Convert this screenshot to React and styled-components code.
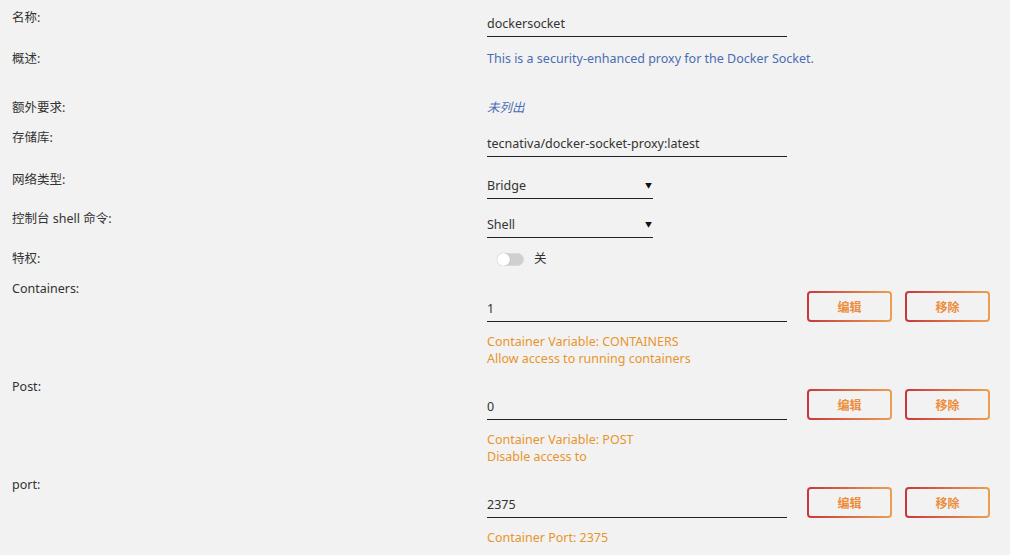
import React from "react";
import styled, { createGlobalStyle } from "styled-components";

const GlobalStyle = createGlobalStyle`
  html, body {
    margin: 0;
    padding: 0;
    background: #f2f2f2;
  }
  body {
    font-family: "Noto Sans", "Noto Sans CJK SC", sans-serif;
    font-size: 12.5px;
    color: #333;
  }
`;

const Form = styled.div`
  display: flex;
  flex-direction: column;
  padding-top: 8px;
  width: 1010px;
  height: 555px;
  overflow: hidden;
`;

const Row = styled.div`
  display: grid;
  grid-template-columns: 475px 1fr;
  padding-left: 12px;
  min-height: ${(p) => p.$h}px;
`;

const Label = styled.div`
  line-height: 20px;
  color: #333;
`;

const Value = styled.div`
  display: flex;
  flex-direction: column;
  align-items: flex-start;
`;

const Field = styled.div`
  box-sizing: border-box;
  width: ${(p) => p.$w || 300}px;
  margin-top: ${(p) => p.$top ?? 6}px;
  line-height: 20px;
  padding-bottom: 2px;
  border-bottom: 1px solid #222;
  color: #333;
  display: flex;
  justify-content: space-between;
  align-items: center;
`;

const Arrow = styled.span`
  font-size: 7px;
  color: #111;
  margin-right: 1px;
`;

const Desc = styled.div`
  line-height: 20px;
  color: #4a6db3;
  font-style: ${(p) => (p.$italic ? "italic" : "normal")};
`;

const ToggleWrap = styled.div`
  display: flex;
  align-items: center;
  gap: 10px;
  margin-left: 10px;
  line-height: 20px;
`;

const Track = styled.div`
  width: 27px;
  height: 13px;
  border-radius: 7px;
  background: #cfcfcf;
  position: relative;
  box-sizing: border-box;
  border: 1px solid #d8d8d8;
`;

const Knob = styled.div`
  position: absolute;
  left: -1px;
  top: -1px;
  width: 13px;
  height: 13px;
  border-radius: 50%;
  background: #fff;
  box-shadow: 0 0 1px rgba(0, 0, 0, 0.3);
`;

const EnvLine = styled.div`
  display: flex;
  align-items: flex-end;
  margin-top: 12px;
`;

const Buttons = styled.div`
  display: flex;
  gap: 13px;
  margin-left: 20px;
`;

const Btn = styled.button`
  width: 85px;
  height: 31px;
  box-sizing: border-box;
  border: 2px solid transparent;
  border-radius: 4px;
  background:
    linear-gradient(#f2f2f2, #f2f2f2) padding-box,
    linear-gradient(90deg, #c9363c, #eaa052) border-box;
  font-family: "Noto Sans", "Noto Sans CJK SC", sans-serif;
  font-size: 12px;
  font-weight: 700;
  color: #ec8d3c;
  padding: 0;
  cursor: pointer;
`;

const Help = styled.div`
  margin-top: 11px;
  line-height: 17px;
  color: #e8952c;
`;

const envs = [
  {
    label: "Containers:",
    value: "1",
    help: ["Container Variable: CONTAINERS", "Allow access to running containers"],
    h: 98,
  },
  {
    label: "Post:",
    value: "0",
    help: ["Container Variable: POST", "Disable access to"],
    h: 98,
  },
  {
    label: "port:",
    value: "2375",
    help: ["Container Port: 2375"],
    h: 80,
  },
];

export default function App() {
  return (
    <>
      <GlobalStyle />
      <Form>
        <Row $h={41}>
          <Label>名称:</Label>
          <Value>
            <Field>dockersocket</Field>
          </Value>
        </Row>
        <Row $h={49}>
          <Label>概述:</Label>
          <Value>
            <Desc>This is a security-enhanced proxy for the Docker Socket.</Desc>
          </Value>
        </Row>
        <Row $h={30}>
          <Label>额外要求:</Label>
          <Value>
            <Desc $italic>未列出</Desc>
          </Value>
        </Row>
        <Row $h={42}>
          <Label>存储库:</Label>
          <Value>
            <Field>tecnativa/docker-socket-proxy:latest</Field>
          </Value>
        </Row>
        <Row $h={39}>
          <Label>网络类型:</Label>
          <Value>
            <Field $w={166}>
              Bridge<Arrow>▼</Arrow>
            </Field>
          </Value>
        </Row>
        <Row $h={40}>
          <Label>控制台 shell 命令:</Label>
          <Value>
            <Field $w={166}>
              Shell<Arrow>▼</Arrow>
            </Field>
          </Value>
        </Row>
        <Row $h={30}>
          <Label>特权:</Label>
          <Value>
            <ToggleWrap>
              <Track>
                <Knob />
              </Track>
              关
            </ToggleWrap>
          </Value>
        </Row>
        {envs.map((e) => (
          <Row key={e.label} $h={e.h}>
            <Label>{e.label}</Label>
            <Value>
              <EnvLine>
                <Field $top={0}>{e.value}</Field>
                <Buttons>
                  <Btn>编辑</Btn>
                  <Btn>移除</Btn>
                </Buttons>
              </EnvLine>
              <Help>
                {e.help.map((t) => (
                  <div key={t}>{t}</div>
                ))}
              </Help>
            </Value>
          </Row>
        ))}
      </Form>
    </>
  );
}
